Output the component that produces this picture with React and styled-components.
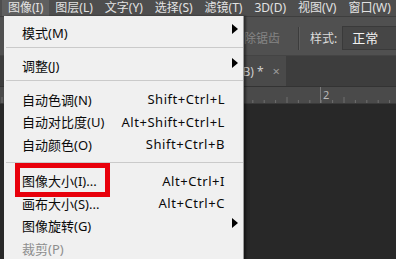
import React from "react";
import styled, { createGlobalStyle } from "styled-components";

const GlobalStyle = createGlobalStyle`
  html, body {
    margin: 0;
    padding: 0;
    background: #282828;
    overflow: hidden;
  }
  body {
    font-family: "Noto Sans", "Noto Sans CJK SC", sans-serif;
  }
`;

const topMenus = ["图像(I)", "图层(L)", "文字(Y)", "选择(S)", "滤镜(T)", "3D(D)", "视图(V)", "窗口(W)"];

const menuItems = [
  { label: "模式(M)", sub: true },
  { sep: 3 },
  { label: "调整(J)", sub: true },
  { sep: 3 },
  { label: "自动色调(N)", key: "Shift+Ctrl+L" },
  { label: "自动对比度(U)", key: "Alt+Shift+Ctrl+L" },
  { label: "自动颜色(O)", key: "Shift+Ctrl+B" },
  { sep: 6 },
  { label: "图像大小(I)...", key: "Alt+Ctrl+I" },
  { label: "画布大小(S)...", key: "Alt+Ctrl+C" },
  { label: "图像旋转(G)", sub: true },
  { label: "裁剪(P)", disabled: true },
];

export default function App() {
  return (
    <Page>
      <GlobalStyle />
      <MenuBar>
        {topMenus.map((m, i) => (
          <TopItem key={m} $active={i === 0}>
            {m}
          </TopItem>
        ))}
      </MenuBar>
      <Workspace>
        <OptionsBar>
          <Muted>消除锯齿</Muted>
          <VSep />
          <Label>样式:</Label>
          <SelectBox>正常</SelectBox>
        </OptionsBar>
        <TabRow>
          <Tab>
            <span>未标题-1 @ 66.7%(RGB) *</span>
            <Close>×</Close>
          </Tab>
        </TabRow>
        <Ruler>
          <svg width="100%" height="16">
            {Array.from({ length: 40 }).map((_, i) => (
              <line
                key={i}
                x1={i * 11.4 + 2}
                x2={i * 11.4 + 2}
                y1={i % 5 === 0 ? 10 : 13}
                y2="16"
                stroke="#6e6e6e"
                strokeWidth="1"
              />
            ))}
            <line x1="320.5" x2="320.5" y1="0" y2="16" stroke="#7a7a7a" />
            <text x="323" y="12" fill="#b8b8b8" fontSize="11" fontFamily="Noto Sans, sans-serif">
              2
            </text>
          </svg>
        </Ruler>
        <Canvas />
      </Workspace>

      <Dropdown>
        {menuItems.map((it, i) =>
          it.sep ? (
            <Separator key={i} $top={it.sep} />
          ) : (
            <Item key={i} $disabled={it.disabled}>
              <span>{it.label}</span>
              <Shortcut>{it.key}</Shortcut>
              <ArrowCell>{it.sub && <Arrow />}</ArrowCell>
            </Item>
          )
        )}
        <Highlight />
      </Dropdown>
    </Page>
  );
}

const Page = styled.div`
  position: relative;
  width: 396px;
  height: 259px;
  display: flex;
  flex-direction: column;
  overflow: hidden;
  background: #282828;
`;

const MenuBar = styled.div`
  height: 16px;
  display: flex;
  align-items: center;
  padding-left: 2px;
  background: #4e4e4e;
  border-bottom: 1px solid #3e3e3e;
`;

const TopItem = styled.div`
  height: 16px;
  line-height: 16px;
  padding: 0 6px;
  font-size: 12px;
  color: #e2e2e2;
  white-space: nowrap;
  background: ${(p) => (p.$active ? "#5f5f5f" : "transparent")};
`;

const Workspace = styled.div`
  flex: 1;
  display: flex;
  flex-direction: column;
`;

const OptionsBar = styled.div`
  height: 39px;
  display: flex;
  align-items: center;
  padding: 4px 0 0 232px;
  box-sizing: border-box;
  background: #505050;
  border-bottom: 1px solid #444;
  font-size: 12px;
`;

const Muted = styled.span`
  color: #858585;
  white-space: nowrap;
`;

const VSep = styled.div`
  width: 1px;
  height: 23px;
  background: #3c3c3c;
  border-right: 1px solid #5c5c5c;
  margin: 0 10px 0 18px;
`;

const Label = styled.span`
  color: #dcdcdc;
  white-space: nowrap;
`;

const SelectBox = styled.div`
  margin-left: 5px;
  flex: 1;
  height: 22px;
  line-height: 22px;
  padding-left: 9px;
  background: #464646;
  border: 1px solid #3a3a3a;
  border-right: none;
  color: #f2f2f2;
  font-size: 13px;
`;

const TabRow = styled.div`
  height: 30px;
  display: flex;
  background: #3d3d3d;
  border-bottom: 1px solid #333;
`;

const Tab = styled.div`
  margin-left: 128px;
  width: 158px;
  display: flex;
  align-items: center;
  justify-content: flex-end;
  gap: 9px;
  padding-right: 6px;
  box-sizing: border-box;
  background: #4a4a4a;
  color: #cfcfcf;
  font-size: 12px;
  white-space: nowrap;
  overflow: hidden;
`;

const Close = styled.span`
  color: #9a9a9a;
  font-size: 13px;
`;

const Ruler = styled.div`
  height: 16px;
  background: #4a4a4a;
  border-bottom: 1px solid #3a3a3a;
  svg {
    display: block;
  }
`;

const Canvas = styled.div`
  flex: 1;
  background: #282828;
`;

const Dropdown = styled.div`
  position: absolute;
  left: 4px;
  top: 16px;
  bottom: -10px;
  width: 240px;
  padding-top: 5px;
  box-sizing: border-box;
  background: #f0f0f0;
  border-right: 1px solid #9a9a9a;
  box-shadow: 2px 0 2px rgba(0, 0, 0, 0.45);
`;

const Item = styled.div`
  height: 22.5px;
  display: grid;
  grid-template-columns: 1fr auto 18px;
  align-items: center;
  padding-left: 18px;
  font-size: 13px;
  color: ${(p) => (p.$disabled ? "#8d8d8d" : "#0a0a0a")};
  white-space: nowrap;
`;

const Shortcut = styled.span`
  text-align: right;
  letter-spacing: 0.55px;
`;

const ArrowCell = styled.span`
  display: flex;
  align-items: center;
  padding-left: 7px;
`;

const Arrow = styled.span`
  width: 0;
  height: 0;
  margin-top: -6px;
  border-left: 6px solid #000;
  border-top: 5px solid transparent;
  border-bottom: 5px solid transparent;
`;

const Separator = styled.div`
  height: 1px;
  margin: ${(p) => p.$top}px 0 7px 2px;
  background: #cacaca;
`;

const Highlight = styled.div`
  position: absolute;
  left: 11px;
  top: 147px;
  width: 95px;
  height: 34px;
  box-sizing: border-box;
  border: 5px solid #e8000b;
  pointer-events: none;
`;
